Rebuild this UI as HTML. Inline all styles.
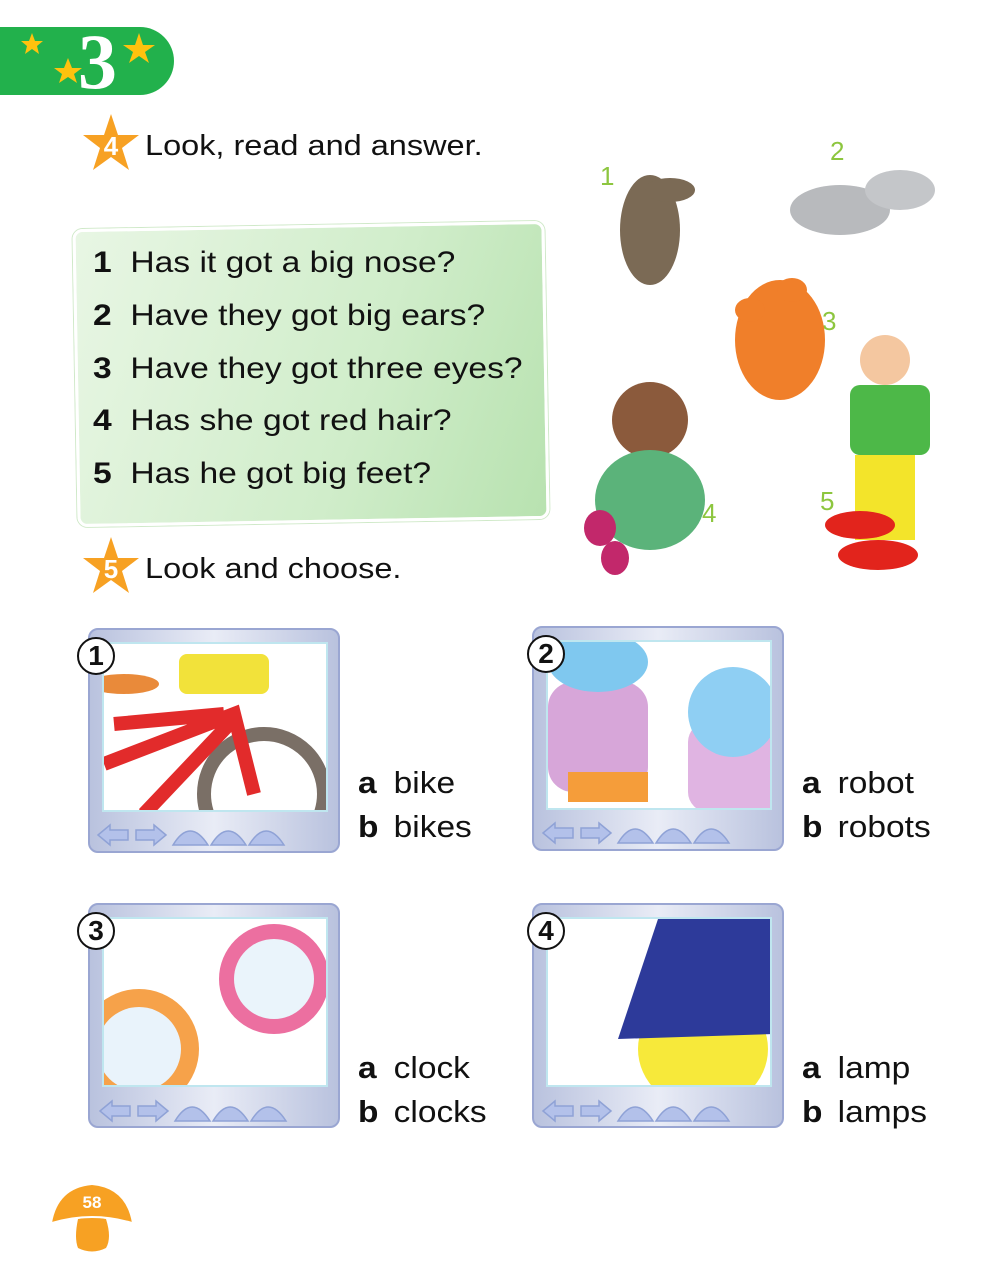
<!DOCTYPE html>
<html><head><meta charset="utf-8"><style>
*{margin:0;padding:0;box-sizing:border-box}
body{width:1000px;height:1272px;background:#fff;position:relative;overflow:hidden;font-family:"Liberation Sans",sans-serif;color:#111}
.abs{position:absolute}
.t{position:absolute;font-size:30px;white-space:nowrap;line-height:1;transform:scaleX(1.12);transform-origin:0 0}
.frame{position:absolute;width:252px;height:225px;border-radius:10px;background:linear-gradient(90deg,#b9c2de,#e9ecf6 50%,#b9c2de);border:2px solid #9aa6d2}
.inner{position:absolute;left:12px;top:12px;width:226px;height:170px;background:#fff;border:2px solid #bfe6ef;overflow:hidden}
.num{position:absolute;width:38px;height:38px;border-radius:50%;background:#fff;border:2px solid #111;font-weight:bold;font-size:28px;text-align:center;line-height:34px}
.ans{position:absolute;font-size:31px;line-height:44px;transform:scaleX(1.08);transform-origin:0 0}
.ans b{font-weight:bold;display:inline-block;width:33px}
</style></head><body>
<div class="abs" style="left:0;top:27px;width:174px;height:68px;background:#22b14c;border-radius:0 34px 34px 0"></div>
<div class="abs" style="left:78px;top:22px;font-family:'Liberation Serif',serif;font-weight:bold;font-size:78px;color:#fff;line-height:80px">3</div>
<svg class="abs" style="left:0;top:20px" width="170" height="80"><g fill="#ffc20e">
<polygon points="32,13 35,21 43,21 37,26 39,34 32,29 25,34 27,26 21,21 29,21"/>
<polygon points="68,38 72,48 82,48 74,54 77,63 68,57 59,63 62,54 54,48 64,48"/>
<polygon points="139,13 143,25 155,25 145,32 149,43 139,36 129,43 133,32 123,25 135,25"/>
</g></svg>
<svg class="abs" style="left:80px;top:112px" width="62" height="62"><polygon fill="#f7a123" points="31,2 38,23 59,23 42,36 49,58 31,45 13,58 20,36 3,23 24,23"/><text x="31" y="43" font-family="Liberation Sans" font-weight="bold" font-size="26" fill="#fff" text-anchor="middle">4</text></svg>
<div class="t" style="left:145px;top:132px;font-size:29px">Look, read and answer.</div>
<div class="abs" style="left:75px;top:225px;width:472px;height:298px;border:3px solid #fff;border-radius:10px;background:linear-gradient(110deg,#e8f6e4,#d0edca 60%,#b8e2b0);transform:rotate(-1deg);box-shadow:0 0 0 1px #cfe9c8"></div>
<div class="t" style="left:93px;top:248px"><b>1</b>&nbsp; Has it got a big nose?</div>
<div class="t" style="left:93px;top:301px"><b>2</b>&nbsp; Have they got big ears?</div>
<div class="t" style="left:93px;top:354px"><b>3</b>&nbsp; Have they got three eyes?</div>
<div class="t" style="left:93px;top:406px"><b>4</b>&nbsp; Has she got red hair?</div>
<div class="t" style="left:93px;top:459px"><b>5</b>&nbsp; Has he got big feet?</div>
<svg class="abs" style="left:560px;top:130px" width="420" height="460">
<g fill="#8dc63f" font-family="Liberation Sans" font-size="26"><text x="40" y="55">1</text><text x="270" y="30">2</text><text x="262" y="200">3</text><text x="142" y="392">4</text><text x="260" y="380">5</text></g>
<ellipse cx="90" cy="100" rx="30" ry="55" fill="#7b6a55"/><ellipse cx="110" cy="60" rx="25" ry="12" fill="#7b6a55"/>
<ellipse cx="280" cy="80" rx="50" ry="25" fill="#b8babd"/><ellipse cx="340" cy="60" rx="35" ry="20" fill="#c4c6c9"/>
<ellipse cx="220" cy="210" rx="45" ry="60" fill="#f07f2a"/><ellipse cx="190" cy="180" rx="15" ry="12" fill="#f07f2a"/><ellipse cx="232" cy="160" rx="15" ry="12" fill="#f07f2a"/>
<circle cx="90" cy="290" r="38" fill="#8b5a3c"/><ellipse cx="90" cy="370" rx="55" ry="50" fill="#5bb37a"/><ellipse cx="40" cy="398" rx="16" ry="18" fill="#c2286b"/><ellipse cx="55" cy="428" rx="14" ry="17" fill="#c2286b"/>
<circle cx="325" cy="230" r="25" fill="#f4c7a0"/><rect x="290" y="255" width="80" height="70" rx="10" fill="#4db848"/><rect x="295" y="325" width="60" height="85" fill="#f3e42a"/><ellipse cx="300" cy="395" rx="35" ry="14" fill="#e2241c"/><ellipse cx="318" cy="425" rx="40" ry="15" fill="#e2241c"/>
</svg>
<svg class="abs" style="left:80px;top:535px" width="62" height="62"><polygon fill="#f7a123" points="31,2 38,23 59,23 42,36 49,58 31,45 13,58 20,36 3,23 24,23"/><text x="31" y="43" font-family="Liberation Sans" font-weight="bold" font-size="26" fill="#fff" text-anchor="middle">5</text></svg>
<div class="t" style="left:145px;top:555px;font-size:29px">Look and choose.</div>

<div class="frame" style="left:88px;top:628px"><div class="inner">
<svg width="226" height="170"><circle cx="160" cy="150" r="60" fill="none" stroke="#7a6f66" stroke-width="14"/><path d="M0 120 L130 70 L150 150 M40 170 L130 75 M10 80 L120 70" stroke="#e22b2b" stroke-width="14" fill="none"/><rect x="75" y="10" width="90" height="40" rx="8" fill="#f2e23a"/><ellipse cx="20" cy="40" rx="35" ry="10" fill="#e98a3a"/></svg></div></div>
<div class="num" style="left:77px;top:637px">1</div>
<div class="ans" style="left:358px;top:761px"><b>a</b>bike<br><b>b</b>bikes</div>

<div class="frame" style="left:532px;top:626px"><div class="inner">
<svg width="226" height="170"><rect x="0" y="40" width="100" height="110" rx="25" fill="#d7a6d9"/><ellipse cx="50" cy="20" rx="50" ry="30" fill="#7fc8ef"/><rect x="140" y="80" width="90" height="90" rx="20" fill="#e0b4e2"/><ellipse cx="185" cy="70" rx="45" ry="45" fill="#8fcff3"/><rect x="20" y="130" width="80" height="30" fill="#f59d3a"/></svg></div></div>
<div class="num" style="left:527px;top:635px">2</div>
<div class="ans" style="left:802px;top:761px"><b>a</b>robot<br><b>b</b>robots</div>

<div class="frame" style="left:88px;top:903px"><div class="inner">
<svg width="226" height="170"><circle cx="170" cy="60" r="55" fill="#ec6fa0"/><circle cx="170" cy="60" r="40" fill="#eaf4fb"/><circle cx="35" cy="130" r="60" fill="#f6a24a"/><circle cx="35" cy="130" r="42" fill="#e9f3fb"/></svg></div></div>
<div class="num" style="left:77px;top:912px">3</div>
<div class="ans" style="left:358px;top:1046px"><b>a</b>clock<br><b>b</b>clocks</div>

<div class="frame" style="left:532px;top:903px"><div class="inner">
<svg width="226" height="170"><ellipse cx="155" cy="130" rx="65" ry="60" fill="#f7e93a"/><polygon points="110,0 226,0 226,115 70,120" fill="#2d3a9a"/></svg></div></div>
<div class="num" style="left:527px;top:912px">4</div>
<div class="ans" style="left:802px;top:1046px"><b>a</b>lamp<br><b>b</b>lamps</div>

<svg class="abs" style="left:0;top:0;pointer-events:none" width="1000" height="1272">
<defs><g id="btns" fill="#b3c1ea" stroke="#8fa2d6" stroke-width="1.5">
<path d="M0 10 L12 0 L12 5 L30 5 L30 15 L12 15 L12 20 Z"/><path d="M68 10 L56 0 L56 5 L38 5 L38 15 L56 15 L56 20 Z"/>
<path d="M75 20 Q92 -8 110 20 Z"/><path d="M113 20 Q130 -8 148 20 Z"/><path d="M151 20 Q168 -8 186 20 Z"/></g></defs>
<use href="#btns" x="98" y="825"/><use href="#btns" x="543" y="823"/><use href="#btns" x="100" y="1101"/><use href="#btns" x="543" y="1101"/>
</svg>
<svg class="abs" style="left:50px;top:1183px" width="86" height="72"><path d="M2 40 Q8 5 42 2 Q76 5 82 40 Q42 28 2 40 Z" fill="#f7a123"/><path d="M28 36 Q42 33 56 36 Q62 55 56 65 Q42 72 28 65 Q24 55 28 36 Z" fill="#f7a123"/><path d="M2 40 Q42 28 82 40" stroke="#fff" stroke-width="2" fill="none"/><text x="42" y="25" text-anchor="middle" font-family="Liberation Sans" font-weight="bold" font-size="17" fill="#fff">58</text></svg>
</body></html>
